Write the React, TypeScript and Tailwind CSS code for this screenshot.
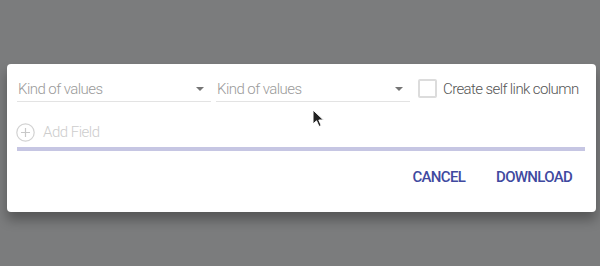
import React from "react";

function Arrow() {
  return (
    <svg width="8" height="4" viewBox="0 0 8 4" className="shrink-0">
      <path d="M0 0 L8 0 L4 4 Z" fill="#757575" />
    </svg>
  );
}

function Select({ w }: { w: string }) {
  return (
    <div className={`${w} h-[25px] flex items-center justify-between border-b border-[#e3e3e3] pl-[1px] pr-[7px]`}>
      <span className="text-[15px] font-light tracking-[-0.55px] text-[#9a9a9a] leading-none">Kind of values</span>
      <Arrow />
    </div>
  );
}

export default function App() {
  return (
    <div
      className="relative w-[600px] h-[266px] bg-[#7b7c7d] pt-[64px] pl-[7px] overflow-hidden"
      style={{ fontFamily: "Roboto, 'Liberation Sans', sans-serif" }}
    >
      <div className="w-[589px] h-[148px] bg-white rounded-[4px] shadow-[0_8px_12px_rgba(0,0,0,0.3)] pl-[10px] pt-[13px]">
        <div className="flex items-center">
          <Select w="w-[194px]" />
          <div className="w-[5px]" />
          <Select w="w-[194px]" />
          <div className="ml-[8px] w-[19px] h-[19px] border-2 border-[#dcdcdc] rounded-[2px] -mt-[2px]" />
          <span className="ml-[6px] text-[15px] font-light tracking-[-0.6px] text-[#555] leading-none">Create self link column</span>
        </div>
        <div className="mt-[21px] h-[18px] flex items-center">
          <svg width="19" height="19" viewBox="0 0 19 19" className="shrink-0 -ml-[1px]">
            <circle cx="9.5" cy="9.5" r="8.7" fill="none" stroke="#d2d2d2" strokeWidth="1.2" />
            <path d="M9.5 5 V14 M5 9.5 H14" stroke="#c8c8c8" strokeWidth="1.2" />
          </svg>
          <span className="ml-[8px] text-[15px] font-light tracking-[-0.5px] text-[#cdcdcd] leading-none">Add Field</span>
        </div>
        <div className="mt-[6px] w-[568px] h-[4px] bg-[#c6c6e3]" />
        <div className="mt-[8px] flex justify-end pr-[24px] gap-[31px]">
          <button className="h-[36px] text-[15px] font-medium text-[#4049a0] uppercase tracking-[-0.7px]">
            Cancel
          </button>
          <button className="h-[36px] text-[15px] font-medium text-[#4049a0] uppercase tracking-[-0.7px]">
            Download
          </button>
        </div>
      </div>
      <svg width="13" height="20" viewBox="0 0 13 20" className="absolute left-[312px] top-[109px]">
        <path d="M1 1 L1 15 L4.5 11.8 L7 17.5 L9.2 16.5 L6.8 11 L11.5 11 Z" fill="#222" stroke="#fff" strokeWidth="1" strokeLinejoin="round" />
      </svg>
    </div>
  );
}
